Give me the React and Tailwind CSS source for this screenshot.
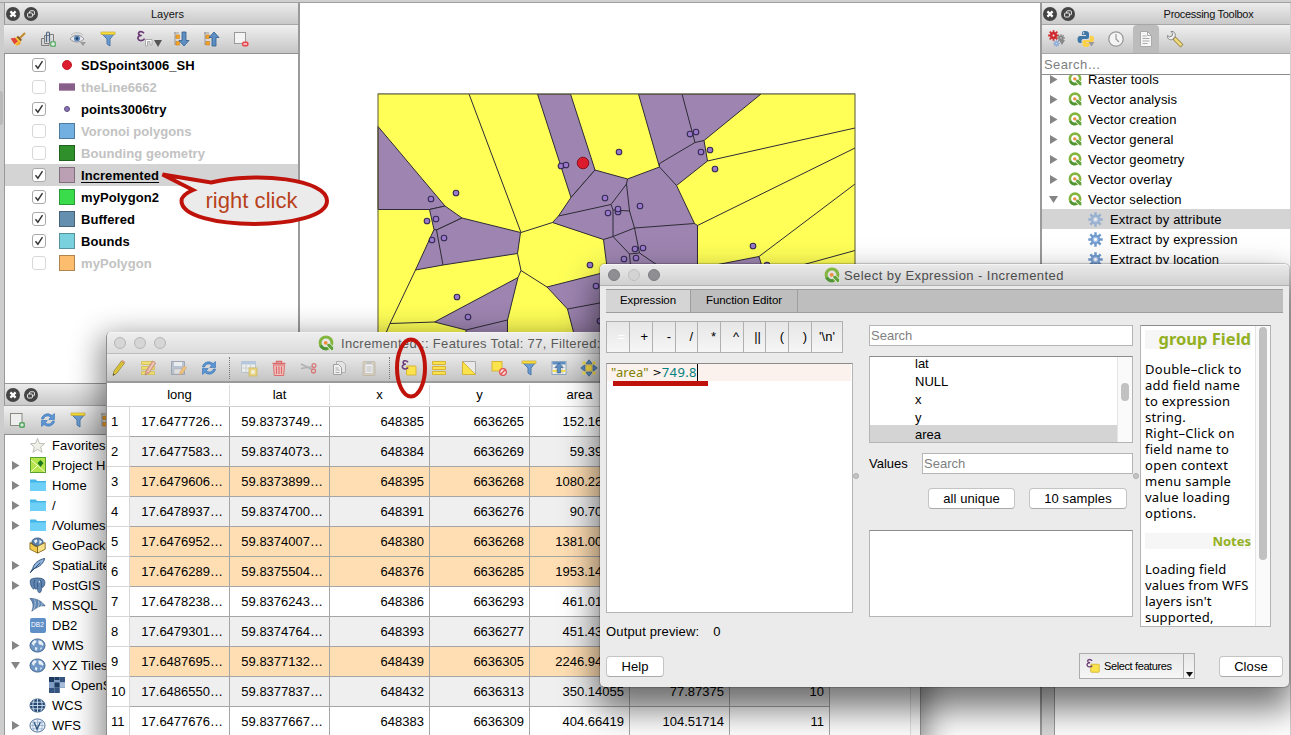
import React from "react";

/* ---------- small icons ---------- */
const Svg = ({ w = 18, h = w, vb = "0 0 18 18", className = "", children }) => (
  <svg width={w} height={h} viewBox={vb} className={"shrink-0 " + className} fill="none">
    {children}
  </svg>
);

const CloseDot = () => (
  <Svg w={14} vb="0 0 14 14">
    <circle cx="7" cy="7" r="7" fill="#444" />
    <path d="M4.4 4.4l5.2 5.2M9.6 4.4l-5.2 5.2" stroke="#fff" strokeWidth="2.2" />
  </Svg>
);
const FloatDot = () => (
  <Svg w={14} vb="0 0 14 14">
    <circle cx="7" cy="7" r="7" fill="#444" />
    <rect x="5.6" y="3.8" width="4.8" height="4" rx=".8" stroke="#eee" />
    <rect x="3.6" y="6" width="4.8" height="4" rx=".8" stroke="#eee" fill="#444" />
  </Svg>
);
const Broom = () => (
  <Svg>
    <path d="M10.500 8.500L16 3" stroke="#c28a2c" strokeWidth="2" />
    <path d="M7.500 6.500l4.500 4.500-1.500 3-3 2L3 11z" fill="#f5c83c" />
    <path d="M1.500 8.500l4.500-.8 3 3.600-3.500 3z" fill="#e0443a" />
    <path d="M8.300 6.500l4 4" stroke="#8a5a22" strokeWidth="1.800" />
    <path d="M7 15.500l4-1 1-3-3 1z" fill="#f2a32f" />
  </Svg>
);
const AddGroup = () => (
  <Svg>
    <path d="M5.500 5.500h5v8h-5zM5 8.500H2.500v7H10V14M11 4.500h3.500V12" stroke="#7d7d7d" />
    <path d="M7.500 12V3.500a1.500 1.500 0 013 0V11" stroke="#4c6683" strokeWidth="1.200" />
    <rect x="11" y="11" width="6" height="6" rx="1.500" fill="#6bb277" />
    <path d="M14 12v4M12 14h4" stroke="#fff" />
  </Svg>
);
const Eye = () => (
  <Svg w={20} vb="0 0 20 18">
    <path d="M2 9c3-5 11-5 14 0-4 4-10 4-14 0z" fill="#e4e8ec" stroke="#999" />
    <path d="M3 5c3-3 9-3 12 0" stroke="#bbb" />
    <circle cx="9" cy="8.500" r="3" fill="#5c87b9" />
    <circle cx="9" cy="8.500" r="1.300" fill="#223a5c" />
    <path d="M12 12h6l-3 4z" fill="#999" />
  </Svg>
);
const Funnel = () => (
  <Svg>
    <path d="M2 3h14l-5 6v7l-3-2V9z" fill="#6b9bd0" stroke="#4d77a8" />
    <path d="M2 2h14v2.500H2z" fill="#f6dd3c" stroke="#c7a52a" strokeWidth=".6" />
  </Svg>
);
const EpsFilter = () => (
  <Svg w={26} h={18} vb="0 0 26 18">
    <path d="M8 3.300C5.500 .4 2 1.600 2.600 4 3 5.500 5 5.500 5.800 5.500 3 5.400 1.500 7 2 8.700 2.700 11.200 7 11.200 8.600 8.600" stroke="#6b3b76" strokeWidth="1.700" />
    <path d="M9.500 9.500H16V15h-2v-3.500h-2.500V16h-2z" fill="#fff" stroke="#aaa" />
    <path d="M18 10h8l-4 7z" fill="#555" />
  </Svg>
);
const TreeArrow = ({ up }) => (
  <Svg>
    <path d="M3 2v13M3 7h3M3 14h3M2 3h5" stroke="#999" />
    <rect x="4" y="5" width="3.500" height="3.500" fill="#f6a623" stroke="#c77a18" strokeWidth=".6" />
    <rect x="4" y="11.500" width="3.500" height="3.500" fill="#f6a623" stroke="#c77a18" strokeWidth=".6" />
    <path d={up ? "M12 2l5 5.500h-3V16h-4V7.500H7z" : "M10 2h4v8.500h3L12 16l-5-5.500h3z"} fill="#5d8fc4" stroke="#345d8c" strokeWidth=".8" />
  </Svg>
);
const RemoveLayer = () => (
  <Svg>
    <rect x="2.500" y="2.500" width="11" height="11" fill="#f4f4f4" stroke="#999" />
    <rect x="10" y="11.500" width="6.500" height="5" rx="1.800" fill="#e8494f" />
    <path d="M11.500 14h3.500" stroke="#fff" strokeWidth="1.200" />
  </Svg>
);
const AddLayer = () => (
  <Svg>
    <rect x="1.500" y="2.500" width="11.500" height="12" fill="#eee" stroke="#888b80" />
    <rect x="10" y="11" width="6" height="6" rx="1.800" fill="#5aa766" />
    <path d="M13 12.300v3.400M11.300 14h3.400" stroke="#fff" />
  </Svg>
);
const Refresh = () => (
  <Svg>
    <path d="M2.500 8C3 3.500 9 1 13 4.500l2.500-2V8.500H9.800L11.600 6.200C9 4 5.500 5 4.600 8z" fill="#5b95d3" stroke="#3871b2" strokeWidth=".6" />
    <path d="M15.500 10C15 14.500 9 17 5 13.500l-2.500 2V9.500h5.700L6.400 11.800C9 14 12.500 13 13.400 10z" fill="#5b95d3" stroke="#3871b2" strokeWidth=".6" />
  </Svg>
);
const QLogo = ({ w = 14 }) => (
  <Svg w={w} vb="0 0 16 16">
    <circle cx="8" cy="7.800" r="5.900" stroke="#84b53f" strokeWidth="3" />
    <path d="M2.600 10.500a5.900 5.900 0 007 3" stroke="#4f9437" strokeWidth="3" />
    <path d="M8.800 8.300h2.900l4 4v3.400h-2.200l-4.700-4.700z" fill="#62a33b" stroke="#fff" strokeWidth=".8" />
    <circle cx="7.700" cy="7.800" r="1.900" fill="#f08a3c" />
  </Svg>
);
const Gear = ({ w = 16, color = "#7099cf", inner = "#a9c3e6", hub = "#fff" }) => (
  <Svg w={w} vb="0 0 16 16">
    <path d="M8 .3v15.400M.3 8h15.400M2.500 2.500l11 11M13.500 2.500l-11 11" stroke={color} strokeWidth="2.600" />
    <circle cx="8" cy="8" r="5" fill={color} />
    <circle cx="8" cy="8" r="3" fill={inner} />
    <circle cx="8" cy="8" r="1.500" fill={hub} />
  </Svg>
);
const Gears = () => (
  <div className="relative h-[18px] w-[20px]">
    <div className="absolute left-[1px] top-0"><Gear w={11} color="#cf2a2e" inner="#cf2a2e" hub="#eee" /></div>
    <div className="absolute left-[10px] top-[4px]"><Gear w={8} color="#888" inner="#888" hub="#ddd" /></div>
    <div className="absolute left-[6px] top-[10px]"><Gear w={7} color="#8fabd8" inner="#8fabd8" hub="#cdd" /></div>
    <div className="absolute left-[12px] top-[10px] h-0 w-0 border-x-[3px] border-t-[5px] border-x-transparent border-t-[#888]" />
  </div>
);
const Python = () => (
  <Svg w={20} vb="0 0 20 18">
    <path d="M8 1c-3 0-3 1-3 3v1h4v1H3C1 6 .500 8 .500 9.500S1 13 3 13h1.500v-2c0-1.500 1-2 2-2H10c1 0 2-.7 2-2V4c0-2-1-3-4-3z" fill="#3f77a8" />
    <path d="M9 17c3 0 3.500-1 3.500-3v-1H9v-.8h5.500c2 0 2.500-2 2.500-3.500s-.6-3-2.500-3H13v2c0 1.500-1 2.300-2 2.300H7.500c-1.200 0-2 .9-2 2V14c0 2 1 3 3.500 3z" fill="#fcd147" />
    <circle cx="6.600" cy="3" r=".8" fill="#fff" />
    <path d="M11.500 12h6l-3 4.500z" fill="#999" />
  </Svg>
);
const Clock = () => (
  <Svg>
    <circle cx="9" cy="9" r="7.200" fill="#f4f4f4" stroke="#999" strokeWidth="1.300" />
    <path d="M9 4v5l3 3" stroke="#999" strokeWidth="1.200" />
  </Svg>
);
const Doc = () => (
  <Svg>
    <path d="M3.500 1.500h7l4 4v11h-11z" fill="#f6f6f6" stroke="#aaa" />
    <path d="M10.500 1.500v4h4M5.500 6h4M5.500 8.500h7M5.500 11h7M5.500 13.500h5" stroke="#aaa" />
  </Svg>
);
const Wrench = () => (
  <Svg>
    <path d="M8 8l8 8" stroke="#8a7a3a" strokeWidth="4" />
    <path d="M8.500 8.500l7 7" stroke="#f0d97a" strokeWidth="2.600" />
    <path d="M1.500 5.500l2 1.500 2.500-1 .7-2.500L5 1.500c3-.5 5 2 4 5L6.500 9.500c-3 1-5.500-1-5-4z" fill="#f2f2f2" stroke="#777" strokeWidth=".9" />
  </Svg>
);
const Pencil = () => (
  <Svg>
    <path d="M4 12L11.500 2l3 2L7 14l-4 2.500z" fill="#e8cf3d" stroke="#8d8238" strokeWidth=".8" />
    <path d="M11.500 2l1-1 3 2-1 1z" fill="#d98" />
    <path d="M3.600 14.500L3 16.500l2-1z" fill="#333" />
    <path d="M5.500 13l7.300-9.800" stroke="#b39d2a" strokeWidth=".7" />
  </Svg>
);
const MultiEdit = () => (
  <Svg className="opacity-80">
    <path d="M1.500 2.500h13v3h-13zM1.500 7.500h13v3h-13zM1.500 12.500h13v3h-13z" fill="#f3e05a" stroke="#d6bd45" />
    <path d="M6 12l6.500-10 3.200 2L9 14l-4 2z" fill="#e8a08a" stroke="#b97862" strokeWidth=".8" />
    <path d="M8 13l6-9.500" stroke="#fbe3d8" strokeWidth=".9" />
  </Svg>
);
const Save = () => (
  <Svg className="opacity-80">
    <path d="M1.500 2.500h13v13h-13z" fill="#b3bfd0" stroke="#8f9aaa" />
    <path d="M4 3h8v4H4z" fill="#eef1f4" />
    <path d="M4 10h8v5H4z" fill="#e2e2e2" stroke="#aaa" strokeWidth=".5" />
    <path d="M10 13l4-6 2.500 1.500-4 6-3 1.500z" fill="#f3c35f" stroke="#d98d6b" strokeWidth=".6" />
  </Svg>
);
const TableNew = () => (
  <Svg className="opacity-80">
    <path d="M1.500 2.500h14v11h-14z" fill="#f4f4ee" stroke="#b3bfcc" />
    <path d="M1.500 2.500h14v3h-14z" fill="#aac4df" />
    <path d="M2 9h13M6 6v7M10.500 6v7" stroke="#c5cdd6" />
    <rect x="9" y="9" width="8" height="8" fill="#eed466" stroke="#cbb450" strokeWidth=".8" />
    <path d="M13 10.500v5M10.500 13h5M11.300 11.300l3.400 3.400M14.700 11.300l-3.400 3.400" stroke="#fff" strokeWidth=".9" />
  </Svg>
);
const Trash = () => (
  <Svg>
    <path d="M3.500 6h11l-.8 10.500H4.300z" fill="#f0c3c0" stroke="#dd6a6a" />
    <path d="M2.500 4.500h13M6.500 4V2.500h5V4" stroke="#dd6a6a" strokeWidth="1.300" />
    <path d="M6.500 7.500v7.500M9 7.500v7.500M11.500 7.500v7.500" stroke="#dd6a6a" strokeWidth="1.200" />
  </Svg>
);
const Scissors = () => (
  <Svg>
    <path d="M1 5l11 5.500M1 9.500l11-1.700" stroke="#b0b0b0" strokeWidth="1.600" />
    <circle cx="14" cy="6.500" r="1.900" stroke="#d87a7a" strokeWidth="1.300" />
    <circle cx="13.500" cy="12" r="2" stroke="#d87a7a" strokeWidth="1.300" />
  </Svg>
);
const Copy = () => (
  <Svg>
    <path d="M6.500 2.500h6l3 3v8h-9z" fill="#e4e4e4" stroke="#b0b0b0" />
    <path d="M3.500 5.500h5l3 3v7h-8z" fill="#f0f0f0" stroke="#a0a0a0" />
    <path d="M5.500 9h3M5.500 11h4M5.500 13.500h4" stroke="#aaa" />
  </Svg>
);
const Paste = () => (
  <Svg className="opacity-80">
    <rect x="3" y="2.500" width="12" height="14" rx="1" fill="#d8ccb4" stroke="#bfb6a4" />
    <rect x="5" y="5" width="8" height="9.500" fill="#f3f3f3" stroke="#bbb" strokeWidth=".6" />
    <path d="M6.500 2h5v3h-5z" fill="#bbb" />
    <path d="M6.500 8h5M6.500 10h5M6.500 12h5" stroke="#bbb" />
  </Svg>
);
const EpsSelect = ({ w = 18 }) => (
  <Svg w={w}>
    <rect x="6.500" y="7" width="9.500" height="9" rx=".6" fill="#fbe34c" stroke="#d6b436" />
    <path d="M8 3.200C6 .6 2.600 1.700 3.100 3.800 3.500 5.300 5 5.300 5.800 5.300 3.200 5.200 1.900 6.800 2.400 8.300 3.100 10.500 6.600 10.600 8.200 8.500" stroke="#6b3b76" strokeWidth="1.500" />
  </Svg>
);
const SelectAll = () => (
  <Svg>
    <path d="M2.500 2.500h13v3h-13zM2.500 7.500h13v3h-13zM2.500 12.500h13v3h-13z" fill="#fbe34c" stroke="#d6b436" />
  </Svg>
);
const Invert = () => (
  <Svg>
    <path d="M2.500 2.500h13v13z" fill="#e9e9e9" stroke="#aaa" />
    <path d="M2.500 2.500v13h13z" fill="#fbe34c" stroke="#d6b436" />
  </Svg>
);
const Deselect = () => (
  <Svg>
    <rect x="2" y="2.500" width="10" height="9.500" fill="#fbe34c" stroke="#d6b436" />
    <circle cx="13" cy="13" r="3.300" fill="#f7dcdc" stroke="#e05252" strokeWidth="1.300" />
    <path d="M10.800 15.200l4.400-4.400" stroke="#e05252" strokeWidth="1.300" />
  </Svg>
);
const MoveTop = () => (
  <Svg>
    <rect x="2" y="2.500" width="14" height="13" fill="#f1f1ec" stroke="#8fa6bf" />
    <path d="M2.500 3h13v2.500h-13z" fill="#5d8fc4" />
    <path d="M2.500 8.500h13M6 6v9M12.500 6v9" stroke="#c4ccd4" strokeWidth=".8" />
    <path d="M2.500 11h13v2h-13z" fill="#f6de4e" />
    <path d="M9 4l4 4.500h-2.300V14H7.300V8.500H5z" fill="#5d8fc4" stroke="#335b88" strokeWidth=".6" />
  </Svg>
);
const PanTo = () => (
  <Svg>
    <path d="M6 6h6v6H6z" fill="#fbe34c" stroke="#d6b436" strokeWidth=".6" />
    <path d="M9 .8l3.200 4H5.800zM9 17.200l3.200-4H5.800zM.8 9l4-3.200v6.400zM17.200 9l-4-3.200v6.400z" fill="#5d8fc4" stroke="#345d8c" strokeWidth=".7" />
    <path d="M2.500 2.500h3v3h-3zM12.500 2.500h3v3h-3zM2.500 12.500h3v3h-3zM12.500 12.500h3v3h-3z" fill="#fbe34c" />
  </Svg>
);

/* ---------- browser tree icons ---------- */
const Star = () => (
  <Svg w={17}><path d="M9 1.500l2.100 5.300 5.400.3-4.200 3.600 1.500 5.500L9 13.100l-4.800 3.100 1.500-5.500L1.500 7.100l5.400-.3z" fill="#f0f0e8" stroke="#b9bdb0" /></Svg>
);
const ProjectIcon = () => (
  <Svg w={16} vb="0 0 16 16">
    <rect x=".5" y=".5" width="15" height="15" fill="#b5e34a" stroke="#5aa02c" />
    <path d="M1 3l14 12M1 15l7-7" stroke="#f2f8d0" />
    <path d="M10.500 3l3 3-3 4-3-4z" fill="#1c7a1c" />
  </Svg>
);
const Folder = () => (
  <Svg w={16} vb="0 0 16 16">
    <path d="M0 2.500h6l1 1.500h9v10H0z" fill="#43b5e6" />
    <path d="M0 5.500h16V14H0z" fill="#6fd0f7" />
  </Svg>
);
const GeoPkg = () => (
  <Svg w={17}>
    <path d="M1 6l8 4 8-4v7l-8 4-8-4z" fill="#f2cb4a" stroke="#7c5c14" strokeWidth=".8" />
    <ellipse cx="9" cy="5.500" rx="6" ry="4.500" fill="#5a80ad" stroke="#2f4e75" strokeWidth=".8" />
    <path d="M5 4l3-1.500 1 2-2 2.500zM11 3l3 2-3 3z" fill="#e8f0f8" />
    <path d="M9 10v7l8-4V6z" fill="#f7e28a" stroke="#7c5c14" strokeWidth=".6" />
    <path d="M1 6l8 4v7" stroke="#7c5c14" strokeWidth=".8" />
  </Svg>
);
const Feather = () => (
  <Svg w={17}><path d="M1.500 16.500L4 12C5 7 10 3 16.500 1.500 16 6 11 11 4.500 12.500z" fill="#8fb3da" stroke="#2d4f78" strokeLinejoin="round" /><path d="M1.500 16.500L12 6" stroke="#2d4f78" /></Svg>
);
const Elephant = () => (
  <Svg w={17}>
    <path d="M2 2.500C5 .5 13 .5 15.500 2.500 18 5 16.500 10 14.500 11c-.5.300-1-.4-1-1-.5 3 0 6-2 6.500s-2.500-2-2.500-5c-.8 1.800-3 2-3 0-.6 1-1.600 2-2.500 0C1.500 9 .5 4.500 2 2.500z" fill="#5f86b3" stroke="#2f4e75" strokeWidth=".8" />
    <path d="M6 3c-1 3-1 5 0 8M12 3c2 3 1 5 1 7M9 6v5" stroke="#2f4e75" strokeWidth=".8" />
    <circle cx="11" cy="5" r=".7" fill="#fff" />
  </Svg>
);
const Mssql = () => (
  <Svg w={17}><path d="M1 1.500c7 0 13 3 16 8-5-1-8 1-14 5.500 2-5 2-9-2-13.500z" fill="#5f86b3" stroke="#3e628d" strokeWidth=".8" /><path d="M5.500 2.500c2 3 1 8-1 11M10 4c1 3 1 5-1 7M13.500 6c.5 2 0 3-1 4" stroke="#c9d9ea" strokeWidth=".8" /></Svg>
);
const Db2 = () => (
  <div className="flex h-[15px] w-4 shrink-0 items-center justify-center rounded-[2px] bg-[#5f8fc7] text-[6.500px] leading-none tracking-[0.2px] text-white">DB2</div>
);
const Globe = ({ dark, v }) => (
  <Svg w={17}>
    <ellipse cx="9" cy="9" rx="8" ry="7" fill={dark ? "#27486f" : v ? "#eef3f9" : "#6f97c6"} stroke="#3c5f87" strokeWidth=".9" />
    {dark || v ? (
      <path d="M1 9h16M2.500 5.500h13M2.500 12.500h13M9 2v14M5.500 3c-2 4-2 8 0 12M12.500 3c2 4 2 8 0 12" stroke={dark ? "#c8dcf0" : "#7fa3cc"} strokeWidth={dark ? "1" : ".7"} />
    ) : (
      <path d="M3 6l2.500-2.500L8 4 7.500 6 6 7l-.5 2.500L3.500 8zM10 3.500l3.500 1L15.500 8 14 9.500l-1-1.500-1.500.5L10 6.500zM6.500 10.500l2.500 1-1 3-1.500-1zM12 11l2 .5-2 2.500z" fill="#e9f0f7" />
    )}
    {v && <path d="M5.500 5.500L8.500 13 12 5.500" stroke="#34587f" strokeWidth="1.500" />}
  </Svg>
);
const Tiles = () => (
  <Svg w={16} vb="0 0 16 16">
    <path d="M0 0h16v11h-5v5H0z" fill="#7f9dc2" />
    <path d="M0 0h5v5H0zM5.500 5.500h5v5h-5zM5.500 0h5v3h-5z" fill="#1f3a5f" />
    <path d="M11 0h5v5h-5zM0 11h5v5H0zM5.500 11h5v5h-5z" fill="#35557f" />
    <path d="M11 5.500h5v5h-5z" fill="#a9bdd6" />
  </Svg>
);

/* ---------- shared bits ---------- */
const PanelTitle = ({ title, className = "" }) => (
  <div className="flex h-[22px] shrink-0 items-center gap-1 border-b border-[#a6a6a6] bg-gradient-to-b from-[#ececec] to-[#c9c9c9] pl-px">
    <CloseDot />
    <FloatDot />
    <div className={"flex-1 whitespace-nowrap pt-px text-center text-[11px] text-[#111] " + className}>{title}</div>
  </div>
);
const Cell = ({ w = "w-[30px]", children, className = "" }) => (
  <div className={"flex h-full shrink-0 items-center justify-center " + w + " " + className}>{children}</div>
);
const Tri = ({ open }) => (
  <Svg w={9} vb="0 0 9 9">{open ? <path d="M0 1h9l-4.500 7z" fill="#858585" /> : <path d="M1 0l7.500 4.500L1 9z" fill="#858585" />}</Svg>
);

/* ---------- layers panel ---------- */
const layers = [
  { n: "SDSpoint3006_SH", on: true, s: "red" },
  { n: "theLine6662", s: "line" },
  { n: "points3006try", on: true, s: "dot" },
  { n: "Voronoi polygons", s: "bg-[#72b0e2]" },
  { n: "Bounding geometry", s: "bg-[#2f8f2a]" },
  { n: "Incremented", on: true, s: "bg-[#bb9fb2]", sel: true },
  { n: "myPolygon2", on: true, s: "bg-[#3bdc4b]" },
  { n: "Buffered", on: true, s: "bg-[#648fae]" },
  { n: "Bounds", on: true, s: "bg-[#7ad1de]" },
  { n: "myPolygon", s: "bg-[#fdbd6f]" },
];
const Swatch = ({ s }) => {
  if (s === "red") return <div className="size-[10px] rounded-full border border-[#c41a2a] bg-[#dc1c2c]" />;
  if (s === "dot") return <div className="size-[6px] rounded-full border border-[#5c5672] bg-[#8d6cc0]" />;
  if (s === "line") return <div className="h-2 w-4 border-y border-[#b58fb0] bg-[#87608a]" />;
  return <div className={"size-4 border border-black/30 " + s} />;
};
const LayersPanel = () => (
  <div className="flex h-[380px] flex-col border-l border-[#999] bg-white">
    <PanelTitle title="Layers" className="pr-[5px]" />
    <div className="-ml-px flex h-[29px] shrink-0 items-center border-b border-[#8f8f8f] bg-gradient-to-b from-[#f0f0f0] to-[#c6c6c6]">
      <Cell className="-ml-px"><Broom /></Cell><Cell><AddGroup /></Cell><Cell><Eye /></Cell><Cell><Funnel /></Cell>
      <Cell w="w-[43px]" className="pl-[9px]"><EpsFilter /></Cell>
      <Cell><TreeArrow /></Cell><Cell><TreeArrow up /></Cell><Cell><RemoveLayer /></Cell>
    </div>
    {layers.map((l) => (
      <div key={l.n} className={"flex h-[22px] shrink-0 items-center pl-[27px] " + (l.sel ? "bg-[#d4d4d4]" : "")}>
        <div className={"flex size-[14px] items-center justify-center rounded-[3px] border bg-white " + (l.on ? "border-[#a9a9a9]" : "border-[#d8d8d8]")}>
          {l.on && <Svg w={10} vb="0 0 10 10"><path d="M1.500 5.200l2.400 3L8.500 1.200" stroke="#333" strokeWidth="1.400" /></Svg>}
        </div>
        <div className="ml-[13px] flex w-4 justify-center"><Swatch s={l.s} /></div>
        <div className={"ml-1.5 whitespace-nowrap pt-px text-[13px] font-bold tracking-[0.070px] " + (l.on ? "text-black " : "text-[#c2c2c2] ") + (l.sel ? "underline underline-offset-2" : "")}>{l.n}</div>
      </div>
    ))}
  </div>
);

/* ---------- browser panel ---------- */
const browser = [
  { n: "Favorites", i: <Star /> },
  { n: "Project Home", i: <ProjectIcon />, a: 1 },
  { n: "Home", i: <Folder />, a: 1 },
  { n: "/", i: <Folder />, a: 1 },
  { n: "/Volumes", i: <Folder />, a: 1 },
  { n: "GeoPackage", i: <GeoPkg /> },
  { n: "SpatiaLite", i: <Feather />, a: 1 },
  { n: "PostGIS", i: <Elephant />, a: 1 },
  { n: "MSSQL", i: <Mssql /> },
  { n: "DB2", i: <Db2 /> },
  { n: "WMS", i: <Globe />, a: 1 },
  { n: "XYZ Tiles", i: <Globe />, a: 2 },
  { n: "OpenStreetMap", i: <Tiles />, child: true },
  { n: "WCS", i: <Globe dark /> },
  { n: "WFS", i: <Globe v />, a: 1 },
];
const BrowserPanel = () => (
  <div className="flex h-[352px] flex-col border-l border-t border-[#999] bg-white">
    <PanelTitle title="" />
    <div className="-ml-px flex h-[29px] shrink-0 items-center border-b border-[#8f8f8f] bg-gradient-to-b from-[#f0f0f0] to-[#c6c6c6]">
      <Cell className="-ml-px"><AddLayer /></Cell><Cell><Refresh /></Cell><Cell><Funnel /></Cell><Cell><TreeArrow up /></Cell>
    </div>
    {browser.map((b) => (
      <div key={b.n} className={"flex h-5 shrink-0 items-center " + (b.child ? "pl-[25px]" : "pl-1.5")}>
        <div className="flex w-[9px] justify-center">{b.a && <Tri open={b.a === 2} />}</div>
        <div className="ml-[9px] flex w-[17px] justify-center">{b.i}</div>
        <div className="ml-[6px] whitespace-nowrap pt-px text-[13px]">{b.n}</div>
      </div>
    ))}
  </div>
);

/* ---------- map ---------- */
const dots = [[431,199],[456,193],[427,221],[436,219],[432,240],[444,238],[457,297],[468,317],[561,166],[566,165],[605,198],[608,213],[590,265],[596,286],[600,321],[619,152],[690,134],[696,132],[701,152],[710,150],[715,169],[640,206],[618,212],[618,209],[635,249],[643,248],[624,259],[636,258],[753,246],[767,265]];
const MapDrawing = () => (
  <svg width="741" height="732" viewBox="300 3 741 732" className="block">
    <rect x="378" y="94" width="477" height="300" fill="#ffff58" />
    <g fill="#9e85b1" stroke="#2d2b36" strokeWidth="1">
      <path d="M378 126.500L445 206 429.500 209.500H378z" />
      <path d="M429.500 209.500L445 206 462 218 436.500 230 434 229.500z" />
      <path d="M434 229.500L436.500 230 462 218 520.500 232.500 517.500 253.500 443 265 415.500 270z" />
      <path d="M434.500 322L518 277.500 507.500 320V345H466V330z" />
      <path d="M547 287L610 271V345H575L573.500 332 567.500 309z" />
      <path d="M537.500 94H570.500L595 170 571 197.500z" />
      <path d="M638.500 94H761L704 140.500 707.500 161 676.500 185.500 694.500 223.500 697.500 225.500V275H608L603.500 239.500 552.500 222.500 558.500 216 571 197.500 595 170 627.500 179 659.500 167z" />
      <path d="M700 268L759 256.500 763 270z" />
    </g>
    <g stroke="#2d2b36" strokeWidth="1" fill="none">
      <path d="M436.500 230L443 265M415.500 270L390 323.500 386 333M390 323.500L434.500 322M466 330L507.500 320M517.500 253.500L521 270.500 518 277.500M521 270.500L547 287M567.500 309L605 302M469 94L521 232.500 552.500 222.500" />
      <path d="M558.500 216L611 204.500 626.500 184 627.500 179M626.500 184L629.500 211 634.500 228 694.500 223.500M611 204.500L613 210V236.500L634.500 228M613 210L629.500 211M603.500 239.500L613 236.500 629.500 254 639.500 253 634.500 228M639.500 253L660 267M629.500 254L630.500 266M659.500 167V163.500L695 142.500 704 140.500M682 94L695 142.500M659.500 167L676.500 185.500M707.500 161L855 128M697.500 225.500L855 148M855 184L759 256.500M795 267L855 250.500" />
    </g>
    <rect x="378" y="94" width="477" height="300" fill="none" stroke="#5b5a2d" />
    <path d="M378 93.500h477" stroke="#8a8a80" />
    <g fill="#9b78cc" stroke="#332b52" strokeWidth="1.100">
      {dots.map(([x, y], i) => <circle key={i} cx={x} cy={y} r="2.800" />)}
    </g>
    <circle cx="583" cy="163" r="5.800" fill="#dc1c2c" stroke="#86131e" />
  </svg>
);

/* ---------- processing toolbox ---------- */
const tools = ["Raster tools", "Vector analysis", "Vector creation", "Vector general", "Vector geometry", "Vector overlay", "Vector selection"];
const Toolbox = () => (
  <div className="flex h-full w-[250px] flex-col border-l-2 border-[#9a9a9a] bg-white">
    <PanelTitle title="Processing Toolbox" className="pl-[48px] tracking-[-0.3px]" />
    <div className="flex h-[29px] shrink-0 items-center border-b border-[#a9a9a9] bg-gradient-to-b from-[#f0f0f0] to-[#c6c6c6]">
      <Cell w="w-[29px]"><Gears /></Cell><Cell className="pl-0.5"><Python /></Cell><Cell><Clock /></Cell>
      <Cell w="w-[26px]" className="ml-0.5 rounded-t bg-[#bcbcbc]"><Doc /></Cell><Cell className="ml-px"><Wrench /></Cell>
    </div>
    <div className="flex h-[21px] shrink-0 items-center border-b border-[#8c8c8c] pl-0.5 pt-px text-[13px] tracking-[0.4px] text-[#808080]">Search…</div>
    <div className="overflow-hidden">
      <div className="-mt-[6px]">
        {tools.map((t, i) => (
          <div key={t} className="flex h-5 items-center pl-[7px]">
            <Tri open={i === 6} />
            <div className="ml-2.5 flex w-[14px]"><QLogo w={14} /></div>
            <div className="ml-[6px] whitespace-nowrap pt-px text-[13px] tracking-[0.12px]">{t}</div>
          </div>
        ))}
        {["attribute", "expression", "location"].map((t, i) => (
          <div key={t} className={"flex h-5 items-center pl-[46px] " + (i === 0 ? "bg-[#d4d4d4]" : "")}>
            <div className={i === 0 ? "opacity-60" : ""}><Gear w={15} /></div>
            <div className="ml-[7px] whitespace-nowrap pt-px text-[13px] tracking-[0.16px]">Extract by {t}</div>
          </div>
        ))}
      </div>
    </div>
  </div>
);

/* ---------- attribute table window ---------- */
const rows = [
  ["17.6477726…", "59.8373749…", "648385", "6636265", "152.16315", ""],
  ["17.6477583…", "59.8374073…", "648384", "6636269", "59.39482", ""],
  ["17.6479606…", "59.8373899…", "648395", "6636268", "1080.22517", ""],
  ["17.6478937…", "59.8374700…", "648391", "6636276", "90.70216", ""],
  ["17.6476952…", "59.8374007…", "648380", "6636268", "1381.00418", ""],
  ["17.6476289…", "59.8375504…", "648376", "6636285", "1953.14072", ""],
  ["17.6478238…", "59.8376243…", "648386", "6636293", "461.01833", ""],
  ["17.6479301…", "59.8374764…", "648393", "6636277", "451.43206", ""],
  ["17.6487695…", "59.8377132…", "648439", "6636305", "2246.94120", ""],
  ["17.6486550…", "59.8377837…", "648432", "6636313", "350.14055", "77.87375"],
  ["17.6477676…", "59.8377667…", "648383", "6636309", "404.66419", "104.51714"],
];
const picked = [2, 4, 5, 8];
const Sep = () => <div className="flex h-full w-2.5 shrink-0 items-center justify-center"><div className="h-[22px] border-l border-dotted border-[#777]" /></div>;
const TableWindow = () => (
  <div className="absolute left-[106px] top-[332px] h-[420px] w-[815px] overflow-hidden rounded-t-[5px] border-x border-[#8d8d8d] bg-white shadow-[0_10px_30px_6px_rgba(0,0,0,0.45)]">
    <div className="flex h-[21px] items-center border-t border-[#f4f4f4] bg-gradient-to-b from-[#eee] to-[#dcdcdc] pl-[7px]">
      <div className="flex gap-2">
        {[0, 1, 2].map((i) => <div key={i} className="size-3 rounded-full border border-[#b5b5b5] bg-[#d6d6d6]" />)}
      </div>
      <div className="ml-[152px] flex shrink-0 items-center gap-[7px]">
        <QLogo w={16} />
        <div className="whitespace-nowrap pt-px text-[13px] tracking-[0.34px] text-[#5a5a5a]">Incremented :: Features Total: 77, Filtered:</div>
      </div>
    </div>
    <div className="-ml-[3px] flex h-[30px] items-center border-b-2 border-t border-b-[#9a9a9a] border-t-[#bdbdbd] bg-gradient-to-b from-[#ebebeb] to-[#c4c4c4]">
      <Cell><Pencil /></Cell><Cell><MultiEdit /></Cell><Cell><Save /></Cell><Cell><Refresh /></Cell><Sep />
      <Cell><TableNew /></Cell><Cell><Trash /></Cell><Cell><Scissors /></Cell><Cell><Copy /></Cell><Cell><Paste /></Cell><Sep />
      <Cell><EpsSelect /></Cell><Cell><SelectAll /></Cell><Cell><Invert /></Cell><Cell><Deselect /></Cell><Cell><Funnel /></Cell><Cell><MoveTop /></Cell><Cell><PanTo /></Cell>
    </div>
    <div className="flex h-[24px] items-center border-b border-[#d0d0d0] text-[13px]">
      <div className="w-[23px]" />
      {["long", "lat", "x", "y", "area", "", ""].map((c, i) => (
        <div key={i} className="flex h-[20px] w-[100px] items-center justify-center border-r border-[#dedede]">{c}</div>
      ))}
      <div className="ml-[80px] h-full w-2.5 border-l border-[#ddd] bg-[#f8f8f8]" />
    </div>
    {rows.map((r, i) => (
      <div key={i} className="flex h-[30px] text-[13px]">
        <div className="flex w-[23px] items-center border-b border-r border-[#d6d6d6] pl-[4px]">{i + 1}</div>
        {[...r, i > 8 ? String(i + 1) : ""].map((v, j) => (
          <div key={j} className={"flex w-[100px] items-center justify-end border-b border-r border-[#a5a5a5] " + (j < 2 ? "pr-[6px] " : "pr-[5px] ") + (picked.includes(i) ? "bg-[#ffdeb3]" : i % 2 ? "bg-[#efefef]" : "bg-white")}>{v}</div>
        ))}
        <div className="ml-[80px] w-2.5 border-l border-[#ddd] bg-[#f8f8f8]" />
      </div>
    ))}
  </div>
);

/* ---------- select by expression dialog ---------- */
const ops = [
  ["=", "w-[23px] text-white"], ["+", "w-[23px]"], ["-", "w-[23px]"], ["/", "w-[22px]"], ["*", "w-[23px]"],
  ["^", "w-[23px]"], ["||", "w-[22px]"], ["(", "w-[23px]"], [")", "w-[23px]"],
];
const Btn = ({ children, className }) => (
  <div className={"flex h-[21px] items-center justify-center rounded-[4px] border border-[#c4c4c4] border-b-[#aaa] bg-white text-[13px] tracking-[0.1px] " + className}>{children}</div>
);
const SearchBox = ({ className = "" }) => (
  <div className={"flex h-[21px] items-center border border-[#b5b5b5] bg-white pl-px pt-px text-[13px] text-[#808080] " + className}>Search</div>
);
const Knob = () => <div className="size-[6px] shrink-0 rounded-full border border-[#aaa] bg-[#c6c6c6]" />;

const Dialog = () => (
  <div className="absolute left-[600px] top-[264px] flex h-[423px] w-[689px] flex-col rounded-[5px] bg-[#ebebeb] shadow-[0_0_1px_1px_rgba(0,0,0,0.2),0_18px_34px_4px_rgba(0,0,0,0.55)]">
    <div className="flex h-[22px] shrink-0 items-center rounded-t-[5px] border-b border-t border-b-[#b0b0b0] border-t-[#f6f6f6] bg-gradient-to-b from-[#e9e9e9] to-[#d0d0d0] pl-2">
      <div className="flex gap-2">
        <div className="size-3 rounded-full border border-[#7e7e82] bg-[#8e8e93]" />
        <div className="size-3 rounded-full border border-[#c0c0c0] bg-[#d3d3d3]" />
        <div className="size-3 rounded-full border border-[#7e7e82] bg-[#8e8e93]" />
      </div>
      <div className="ml-[164px] flex items-center gap-1">
        <QLogo w={16} />
        <div className="whitespace-nowrap pt-px text-[13px] tracking-[0.43px] text-[#4c4c4c]">Select by Expression - Incremented</div>
      </div>
    </div>
    <div className="mx-1.5 mt-[3px] flex h-[24px] shrink-0 border-y border-[#9e9e9e] bg-[#bebebe] text-[11.500px] tracking-[-0.1px]">
      <div className="flex w-[85px] items-center justify-center border-r border-[#9e9e9e] bg-[#d5d5d5]">Expression</div>
      <div className="flex w-[107px] items-center justify-center border-r border-[#9e9e9e]">Function Editor</div>
    </div>
    <div className="flex h-[315px] shrink-0 pl-1.5">
      <div className="flex w-[247px] flex-col pt-[8px]">
        <div className="flex h-[32px] w-[237px] shrink-0 border border-[#b0b0b0] bg-gradient-to-b from-[#e6e6e6] to-[#f6f6f6] text-[13px]">
          {ops.map(([o, c]) => (
            <div key={o} className={"flex shrink-0 items-center justify-end border-r border-[#b0b0b0] pr-[4px] " + c}>{o}</div>
          ))}
          <div className="flex flex-1 items-center justify-center">'\n'</div>
        </div>
        <div className="mt-[10px] h-[250px] shrink-0 border border-[#b5b5b5] border-t-[#8c8c8c] bg-white">
          <div className="mr-px flex h-[17px] items-center bg-[#fcf2ed] pl-1 font-['Noto_Sans'] text-[13px] leading-none">
            <span className="tracking-[0.1px] text-[#808000]">"area"</span>
            <span className="ml-1 font-['DejaVu_Sans'] text-[11px]">&gt;</span>
            <span className="tracking-[0.35px] text-[#008080]">749.8</span>
            <span className="h-[17px] w-px bg-black" />
          </div>
          <div className="ml-1.5 h-[5px] w-[95px] bg-[#bf120b]" />
        </div>
      </div>
      <div className="flex w-[16px] items-center pt-[11px]"><Knob /></div>
      <div className="flex w-[264px] flex-col pt-[12px]">
        <SearchBox />
        <div className="mt-[10px] flex h-[87px] shrink-0 border border-[#b5b5b5] border-t-[#8c8c8c] bg-white">
          <div className="flex flex-1 flex-col justify-end overflow-hidden text-[13px]">
            {["lat", "NULL", "x", "y", "area"].map((f) => (
              <div key={f} className={"flex shrink-0 items-center pl-[45px] pt-[3px] " + (f === "area" ? "h-[17px] bg-[#d4d4d4]" : "h-[18px]")}>{f}</div>
            ))}
          </div>
          <div className="w-[15px] border-l border-[#e4e4e4] bg-[#fafafa] pl-[3px] pt-[26px]">
            <div className="h-[18px] w-2 rounded-full bg-[#c1c1c1]" />
          </div>
        </div>
        <div className="mt-[10px] flex items-center justify-between text-[13px]">
          <span>Values</span>
          <SearchBox className="w-[211px]" />
        </div>
        <div className="mt-[14px] flex pl-[59px]">
          <Btn className="w-[87px]">all unique</Btn>
          <Btn className="ml-[14px] w-[98px]">10 samples</Btn>
        </div>
        <div className="mt-[21px] h-[87px] shrink-0 border border-[#b5b5b5] border-t-[#8c8c8c] bg-white" />
      </div>
      <div className="flex w-[7px] items-center pt-[11px]"><Knob /></div>
      <div className="mt-[12px] flex h-[302px] w-[131px] overflow-hidden border border-[#b5b5b5] border-t-[#8c8c8c] bg-white">
        <div className="w-[114px] pl-1 pt-1 font-['Noto_Sans'] text-[13px] leading-4">
          <div className="mr-1 h-[19px] whitespace-nowrap bg-[#f6f6f6] text-right text-[16.500px] font-bold leading-[18px] text-[#93b023]">group Field</div>
          <div className="mt-[12px] whitespace-nowrap tracking-[0.26px]">
            Double–click to<br />add field name<br />to expression<br />string.<br />Right–Click on<br />field name to<br />open context<br />menu sample<br />value loading<br />options.
          </div>
          <div className="mr-1 mt-[12px] h-4 bg-[#f6f6f6] text-right text-[13px] font-bold text-[#93b023]">Notes</div>
          <div className="mt-[12px] whitespace-nowrap tracking-[0.16px]">
            Loading field<br />values from WFS<br />layers isn't<br />supported,
          </div>
        </div>
        <div className="flex-1 border-l border-[#e4e4e4] bg-[#fafafa] pl-[3px] pt-px">
          <div className="h-[233px] w-2 rounded-full bg-[#c1c1c1]" />
        </div>
      </div>
    </div>
    <div className="-mt-[4px] flex h-4 items-center gap-[14px] pl-1.5 text-[13px]"><span className="tracking-[0.15px]">Output preview:</span><span>0</span></div>
    <div className="mt-[13px] flex items-start pl-1.5">
      <Btn className="mt-[3px] w-[58px]">Help</Btn>
      <div className="ml-[415px] flex h-[26px] w-[116px] border border-[#adadad] bg-gradient-to-b from-[#e8e8e8] to-[#f6f6f6]">
        <div className="flex w-[104px] items-center gap-[3px] border-r border-[#adadad] pl-[5px] text-[11px] tracking-[-0.38px]"><EpsSelect w={16} /><span className="whitespace-nowrap">Select features</span></div>
        <div className="flex flex-1 items-end justify-center pb-px"><Svg w={7} h={5} vb="0 0 7 5"><path d="M0 0h7L3.500 5z" fill="#111" /></Svg></div>
      </div>
      <Btn className="ml-[24px] mt-[3px] w-[64px]">Close</Btn>
    </div>
  </div>
);

export default function App() {
  return (
    <div className="relative flex h-[735px] w-[1291px] flex-col overflow-hidden bg-[#cfcfcf] font-['Liberation_Sans',sans-serif] text-black">
      <div className="h-[3px] shrink-0 border-b border-[#a0a0a0] bg-[#cfcfcf]" />
      <div className="flex h-[732px] shrink-0">
        <div className="h-full w-1 bg-[#cdcdcd] pt-[88px]"><div className="h-[34px] w-[3px] rounded-r bg-[#b9b9b9]" /></div>
        <div className="flex w-[294px] flex-col"><LayersPanel /><BrowserPanel /></div>
        <div className="h-full w-0.5 bg-[#9a9a9a]" />
        <div className="w-[740px] overflow-hidden bg-white"><MapDrawing /></div>
        <Toolbox />
      </div>
      <div className="absolute left-[1042px] top-[660px] h-[75px] w-[13px] border-r border-[#999] bg-[#d8d8d8]" />
      <TableWindow />
      <Dialog />
      <svg width="180" height="70" viewBox="155 165 180 70" className="absolute left-[155px] top-[165px]">
        <path d="M162.500 174.500L211 182.500C256 171.500 327 179 327 201 327 231.500 181.500 231.500 181.500 201 181.500 197 186 193 193 190z" fill="#ebebeb" stroke="#bf120b" strokeWidth="4" />
        <text x="205.500" y="208" fontSize="22" fill="#b8421c" textLength="92" className="font-['Liberation_Sans']">right click</text>
      </svg>
      <svg width="36" height="64" viewBox="0 0 36 64" className="absolute left-[393px] top-[336px]">
        <ellipse cx="18" cy="32" rx="14" ry="28.500" fill="none" stroke="#bf120b" strokeWidth="4" />
      </svg>
    </div>
  );
}
